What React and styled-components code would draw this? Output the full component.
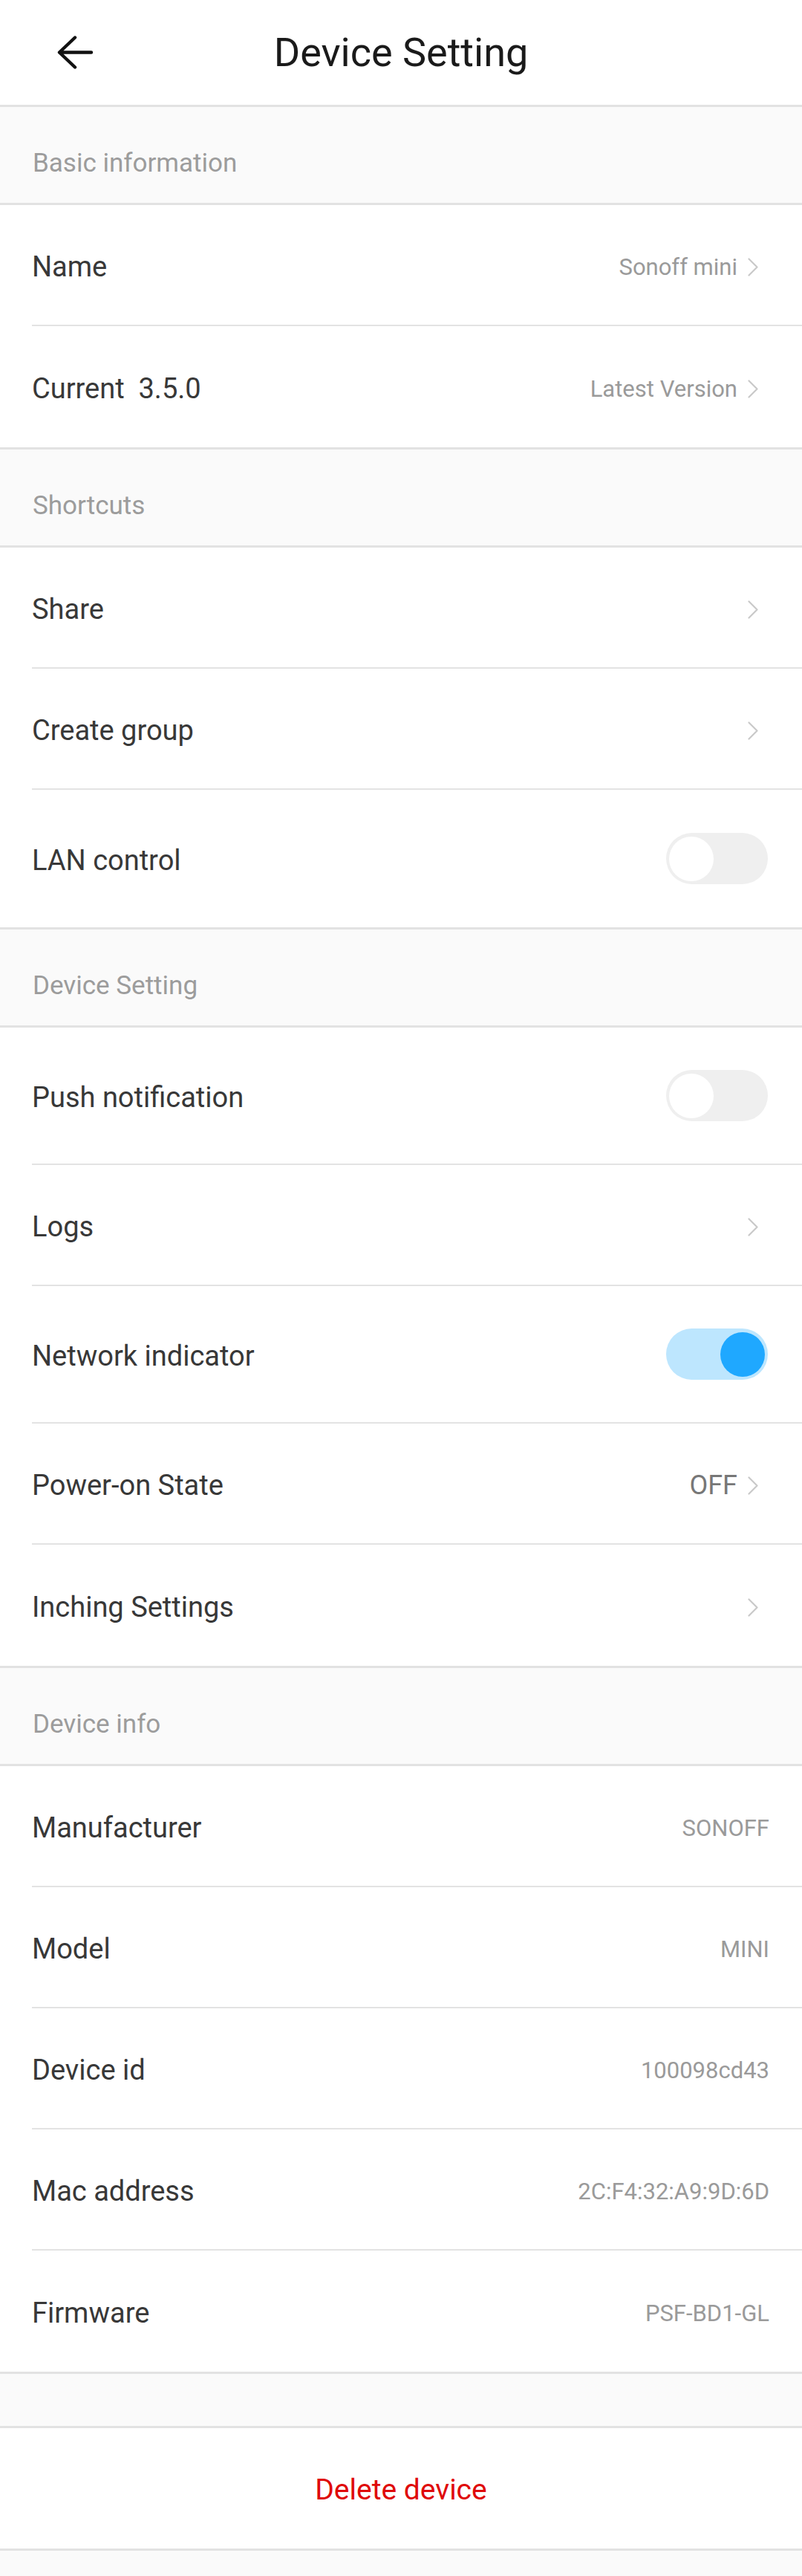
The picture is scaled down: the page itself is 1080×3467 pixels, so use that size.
import React from "react"
import styled, { createGlobalStyle } from "styled-components"

const GlobalStyle = createGlobalStyle`
  html, body {
    margin: 0;
    padding: 0;
    background: #fafafa;
    font-family: Roboto, "Noto Sans", "Liberation Sans", sans-serif;
    -webkit-font-smoothing: antialiased;
  }
  * {
    box-sizing: border-box;
  }
`

const Page = styled.div`
  width: 1080px;
  min-height: 3467px;
  background: #fafafa;
`

const Header = styled.header`
  display: grid;
  grid-template-columns: 1fr auto 1fr;
  align-items: center;
  height: 144px;
  background: #fff;
  border-bottom: 3px solid #e2e2e2;
`

const BackButton = styled.button`
  justify-self: start;
  display: flex;
  align-items: center;
  margin-left: 76px;
  padding: 0;
  border: 0;
  background: none;
  cursor: pointer;
`

const Title = styled.h1`
  margin: 0;
  font-size: 54px;
  font-weight: 400;
  color: #1a1a1a;
`

const SectionTitle = styled.div`
  display: flex;
  align-items: center;
  height: 132px;
  padding: 21px 0 0 44px;
  font-size: 35px;
  color: #9c9c9c;
  background: #fafafa;
  border-bottom: 3px solid #e2e2e2;
`

const Group = styled.div`
  background: #fff;
  border-bottom: 3px solid #e2e2e2;
`

const Row = styled.div`
  padding-left: 43px;
  &:last-child > div {
    border-bottom: 0;
  }
`

const RowInner = styled.div`
  display: flex;
  align-items: center;
  justify-content: space-between;
  height: ${(p) => (p.$tall ? 185 : 163)}px;
  padding-right: 44px;
  border-bottom: 2px solid #e3e3e3;
`

const Label = styled.span`
  padding-top: 5px;
  font-size: 38px;
  color: #383838;
  white-space: pre;
`

const Trailing = styled.div`
  display: flex;
  align-items: center;
  padding-top: 5px;
`

const Value = styled.span`
  font-size: ${(p) => (p.$strong ? 36 : 31)}px;
  color: ${(p) => (p.$strong ? "#777" : "#9a9a9a")};
`

const Chevron = styled.svg`
  display: block;
  margin: 0 15px 0 14px;
`

const Track = styled.div`
  display: flex;
  align-items: center;
  justify-content: ${(p) => (p.$on ? "flex-end" : "flex-start")};
  width: 137px;
  height: 69px;
  margin-right: 2px;
  padding: 0 4px;
  border-radius: 35px;
  background: ${(p) => (p.$on ? "#bde6fe" : "#efefef")};
`

const Knob = styled.div`
  width: 60px;
  height: 60px;
  border-radius: 50%;
  background: ${(p) => (p.$on ? "#1fa8ff" : "#fff")};
`

const Spacer = styled.div`
  height: 73px;
  background: #fafafa;
  border-bottom: 3px solid #e2e2e2;
`

const DeleteRow = styled.div`
  display: flex;
  align-items: center;
  justify-content: center;
  height: 165px;
  padding-top: 4px;
  background: #fff;
  border-bottom: 3px solid #e2e2e2;
  font-size: 39px;
  color: #df0a0a;
`

function ChevronIcon() {
  return (
    <Chevron width="14" height="25" viewBox="0 0 14 25">
      <path
        d="M1.5 1.5 L12.5 12.5 L1.5 23.5"
        fill="none"
        stroke="#c9c9c9"
        strokeWidth="2.2"
        strokeLinecap="round"
        strokeLinejoin="round"
      />
    </Chevron>
  )
}

function Toggle({ on }) {
  return (
    <Track $on={on}>
      <Knob $on={on} />
    </Track>
  )
}

function SettingRow({ label, value, strong, arrow, toggle, on }) {
  return (
    <Row>
      <RowInner $tall={toggle}>
        <Label>{label}</Label>
        {toggle ? (
          <Toggle on={on} />
        ) : (
          <Trailing>
            {value && <Value $strong={strong}>{value}</Value>}
            {arrow && <ChevronIcon />}
          </Trailing>
        )}
      </RowInner>
    </Row>
  )
}

const sections = [
  {
    title: "Basic information",
    rows: [
      { label: "Name", value: "Sonoff mini", arrow: true },
      { label: "Current  3.5.0", value: "Latest Version", arrow: true },
    ],
  },
  {
    title: "Shortcuts",
    rows: [
      { label: "Share", arrow: true },
      { label: "Create group", arrow: true },
      { label: "LAN control", toggle: true, on: false },
    ],
  },
  {
    title: "Device Setting",
    rows: [
      { label: "Push notification", toggle: true, on: false },
      { label: "Logs", arrow: true },
      { label: "Network indicator", toggle: true, on: true },
      { label: "Power-on State", value: "OFF", strong: true, arrow: true },
      { label: "Inching Settings", arrow: true },
    ],
  },
  {
    title: "Device info",
    rows: [
      { label: "Manufacturer", value: "SONOFF" },
      { label: "Model", value: "MINI" },
      { label: "Device id", value: "100098cd43" },
      { label: "Mac address", value: "2C:F4:32:A9:9D:6D" },
      { label: "Firmware", value: "PSF-BD1-GL" },
    ],
  },
]

export default function App() {
  return (
    <Page>
      <GlobalStyle />
      <Header>
        <BackButton aria-label="Back">
          <svg width="50" height="45" viewBox="0 0 50 45">
            <path
              d="M47 22.5 H4 M25 2.5 L4 22.5 L25 42.5"
              fill="none"
              stroke="#111"
              strokeWidth="4.4"
              strokeLinecap="round"
              strokeLinejoin="round"
            />
          </svg>
        </BackButton>
        <Title>Device Setting</Title>
        <div />
      </Header>

      {sections.map((section) => (
        <section key={section.title}>
          <SectionTitle>{section.title}</SectionTitle>
          <Group>
            {section.rows.map((row) => (
              <SettingRow key={row.label} {...row} />
            ))}
          </Group>
        </section>
      ))}

      <Spacer />
      <DeleteRow>Delete device</DeleteRow>
    </Page>
  )
}
